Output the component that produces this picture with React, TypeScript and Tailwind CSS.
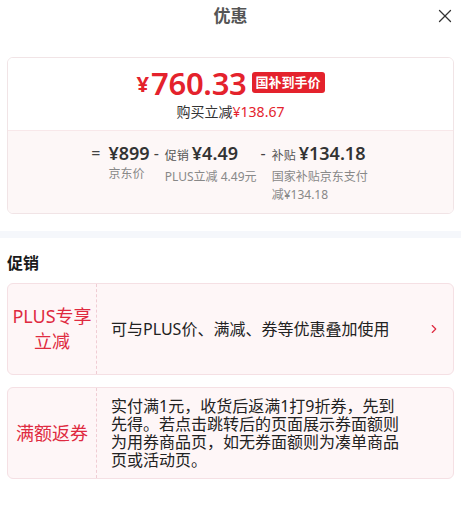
import { X, ChevronRight } from "lucide-react";

const cjk = "font-['Noto_Sans','Noto_Sans_CJK_SC',sans-serif]";

function PromoCard({ label, children, arrow }: { label: React.ReactNode; children: React.ReactNode; arrow?: boolean }) {
  return (
    <div className="mx-[7px] flex h-[92px] rounded-md border border-[#f5e0e4] bg-[#fef6f7]">
      <div className="flex w-[89px] shrink-0 items-center justify-center border-r border-dashed border-[#f0cdd4] text-center text-[18px] leading-[25px] text-[#df2a40]">
        {label}
      </div>
      <div className="flex flex-1 items-center pl-[14px] pr-[12px] text-[16px] leading-[18px] text-[#222]">
        <div className="flex-1">{children}</div>
        {arrow && <ChevronRight className="h-[14px] w-[14px] text-[#df2a40]" strokeWidth={2} />}
      </div>
    </div>
  );
}

export default function App() {
  return (
    <div className={`w-[461px] h-[531px] bg-white ${cjk}`}>
      {/* header */}
      <div className="relative flex h-[32px] items-center justify-center">
        <span className="text-[17px] font-bold text-[#555]">优惠</span>
        <X className="absolute right-[5px] top-[5px] h-[22px] w-[22px] text-[#333]" strokeWidth={1.4} />
      </div>

      {/* price card */}
      <div className="mx-[7px] mt-[25px] overflow-hidden rounded-md border border-[#f1e4e6]">
        <div className="flex h-[72px] flex-col items-center justify-center bg-white">
          <div className="flex h-[30px] items-center">
            <div className="font-['Noto_Sans',sans-serif] text-[22px] font-bold leading-[26px] text-[#e4222c]">¥</div>
            <div className="ml-[2px] font-['Noto_Sans',sans-serif] text-[31px] font-semibold leading-[30px] tracking-[-0.3px] text-[#e4222c]">760.33</div>
            <div className="ml-[5px] rounded-[3px] bg-[#e4222c] px-[4px] text-[13px] font-bold leading-[21px] text-white">国补到手价</div>
          </div>
          <div className="mt-[5px] text-[14px] leading-[18px] text-[#333]">
            购买立减<span className="text-[#e4222c]">¥138.67</span>
          </div>
        </div>
        <div className="flex h-[83px] justify-center gap-[4px] border-t border-[#f8e8ea] bg-[#fdf7f7] pt-[10px]">
          <div className="flex gap-[8px]">
            <span className="text-[16px] leading-[24px] text-[#444]">=</span>
            <div>
              <div className="text-[18px] font-semibold leading-[24px] text-[#333]">¥899</div>
              <div className="text-[12px] leading-[18px] text-[#888]">京东价</div>
            </div>
          </div>
          <div className="flex gap-[6px]">
            <span className="text-[16px] leading-[24px] text-[#444]">-</span>
            <div>
              <div className="flex items-baseline gap-[3px] leading-[24px]">
                <span className="text-[12px] text-[#555]">促销</span>
                <span className="text-[18px] font-semibold text-[#333]">¥4.49</span>
              </div>
              <div className="text-[12px] leading-[18px] text-[#888]">PLUS立减 4.49元</div>
            </div>
          </div>
          <div className="flex gap-[6px]">
            <span className="text-[16px] leading-[24px] text-[#444]">-</span>
            <div className="w-[98px]">
              <div className="flex items-baseline gap-[3px] leading-[24px]">
                <span className="text-[12px] text-[#555]">补贴</span>
                <span className="text-[18px] font-semibold text-[#333]">¥134.18</span>
              </div>
              <div className="text-[12px] leading-[18px] text-[#888]">国家补贴京东支付减¥134.18</div>
            </div>
          </div>
        </div>
      </div>

      <div className="mt-[17px] h-[7px] bg-[#f5f7fb]" />

      <div className="px-[7px] pt-[15px] pb-[10px] text-[16px] font-bold leading-[20px] text-[#1a1a1a]">促销</div>

      <PromoCard label={<>PLUS专享<br />立减</>} arrow>
        可与PLUS价、满减、券等优惠叠加使用
      </PromoCard>
      <div className="h-[12px]" />
      <PromoCard label="满额返券">
        <div className="w-[292px]">实付满1元，收货后返满1打9折券，先到先得。若点击跳转后的页面展示券面额则为用券商品页，如无券面额则为凑单商品页或活动页。</div>
      </PromoCard>
    </div>
  );
}
